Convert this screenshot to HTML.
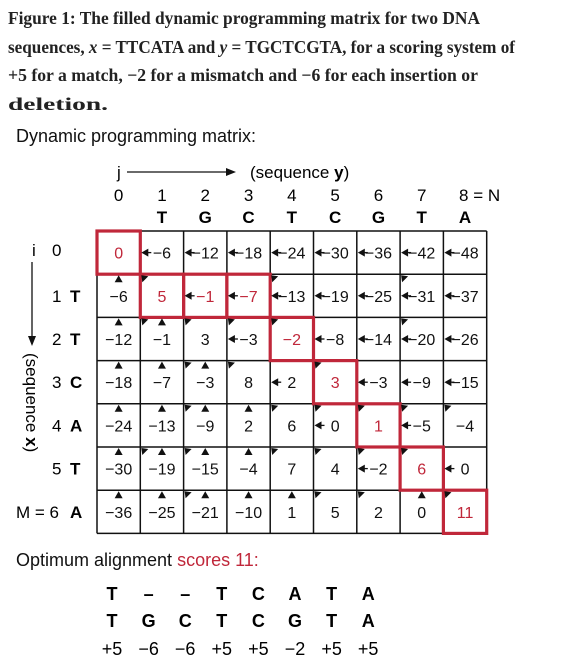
<!DOCTYPE html>
<html><head><meta charset="utf-8"><style>
body{margin:0;width:565px;height:668px;background:#fff;position:relative;overflow:hidden;font-family:"Liberation Sans",sans-serif;color:#111}
.a{position:absolute;white-space:nowrap}
</style></head><body>
<svg width="565" height="120" style="position:absolute;left:0;top:0" font-family="Liberation Serif, serif" font-weight="bold" font-size="17.5" fill="#222">
<text x="8" y="24" textLength="472" lengthAdjust="spacingAndGlyphs">Figure 1: The filled dynamic programming matrix for two DNA</text>
<text x="8" y="53" textLength="507" lengthAdjust="spacingAndGlyphs">sequences, <tspan font-style="italic">x</tspan> = TTCATA and <tspan font-style="italic">y</tspan> = TGCTCGTA, for a scoring system of</text>
<text x="8" y="81" textLength="470" lengthAdjust="spacingAndGlyphs">+5 for a match, −2 for a mismatch and −6 for each insertion or</text>
<text x="8" y="110" textLength="100" lengthAdjust="spacingAndGlyphs">deletion.</text>
</svg>
<div class="a" style="left:16px;top:126px;font-size:18px">Dynamic programming matrix:</div>
<svg id="m" width="565" height="668" style="position:absolute;left:0;top:0" font-family="Liberation Sans, sans-serif"></svg>
<div class="a" style="left:16px;top:550px;font-size:18px">Optimum alignment <span style="color:#c0273a">scores 11:</span></div>
<script>
var s=document.getElementById('m'),h='';
var X=97,Y=231,W=43.3,H=43.2,x="TTCATA",y="TGCTCGTA",R="#c0273a";
function t(px,py,str,o){h+='<text x="'+px+'" y="'+py+'" '+(o||'')+'>'+str+'</text>';}
t(117,178,'j','font-size="17"');
h+='<line x1="127" y1="172" x2="228" y2="172" stroke="#111" stroke-width="1.3"/><polygon points="236,172 226,168 226,176" fill="#111"/>';
t(250,178,'(sequence <tspan font-weight="bold">y</tspan>)','font-size="17"');
for(var j=0;j<=8;j++){var cx=X+W*(j+0.5);t(cx,201,j==8?'8 = N':j,'font-size="17" text-anchor="'+(j==8?'start':'middle')+'"'+(j==8?' dx="-6"':''));if(j>0)t(cx,223,y[j-1],'font-size="17" font-weight="bold" text-anchor="middle"');}
t(32,256,'i','font-size="17"');t(52,256,'0','font-size="17"');
for(var i=1;i<=6;i++){var cy=Y+H*(i+0.5)+6;t(i==6?16:52,cy,i==6?'M = 6':i,'font-size="17"');t(70,cy,x[i-1],'font-size="17" font-weight="bold"');}
h+='<line x1="32" y1="262" x2="32" y2="338" stroke="#111" stroke-width="1.3"/><polygon points="32,346 28,336 36,336" fill="#111"/>';
h+='<text transform="translate(26,353) rotate(90)" font-size="17">(sequence <tspan font-weight="bold">x</tspan>)</text>';
var F=[],P=[];
for(var i=0;i<=6;i++){F[i]=[];P[i]=[];for(var j=0;j<=8;j++){
 if(i==0&&j==0){F[i][j]=0;P[i][j]={};continue;}
 var c=[];if(i>0&&j>0)c.push(['d',F[i-1][j-1]+(x[i-1]==y[j-1]?5:-2)]);
 if(i>0)c.push(['u',F[i-1][j]-6]);if(j>0)c.push(['l',F[i][j-1]-6]);
 var m=Math.max.apply(null,c.map(function(a){return a[1]}));F[i][j]=m;P[i][j]={};c.forEach(function(a){if(a[1]==m)P[i][j][a[0]]=1;});}}
var path={"0,0":1,"1,1":1,"1,2":1,"1,3":1,"2,4":1,"3,5":1,"4,6":1,"5,7":1,"6,8":1};
for(var i=0;i<=7;i++)h+='<line x1="'+X+'" y1="'+(Y+H*i)+'" x2="'+(X+9*W)+'" y2="'+(Y+H*i)+'" stroke="#111" stroke-width="1.5"/>';
for(var j=0;j<=9;j++)h+='<line x1="'+(X+W*j)+'" y1="'+Y+'" x2="'+(X+W*j)+'" y2="'+(Y+7*H)+'" stroke="#111" stroke-width="1.5"/>';
for(var k in path){var a=k.split(',');h+='<rect x="'+(X+W*a[1])+'" y="'+(Y+H*a[0])+'" width="'+W+'" height="'+H+'" fill="none" stroke="'+R+'" stroke-width="3.2"/>';}
for(var i=0;i<=6;i++)for(var j=0;j<=8;j++){
 var x0=X+W*j,y0=Y+H*i,red=path[i+','+j],v=F[i][j];
 t(x0+W/2,y0+H/2+6,(v<0?'−'+(-v):v),'font-size="16" text-anchor="middle" fill="'+(red?R:'#111')+'"');
 var p=P[i][j];
 if(p.l)h+='<polygon points="'+(x0+1)+','+(y0+H/2)+' '+(x0+8)+','+(y0+H/2-4)+' '+(x0+8)+','+(y0+H/2+4)+'" fill="#111"/><line x1="'+(x0+7)+'" y1="'+(y0+H/2)+'" x2="'+(x0+11)+'" y2="'+(y0+H/2)+'" stroke="#111" stroke-width="1.3"/>';
 if(p.u)h+='<polygon points="'+(x0+W/2)+','+(y0+1)+' '+(x0+W/2-4)+','+(y0+8)+' '+(x0+W/2+4)+','+(y0+8)+'" fill="#111"/>';
 if(p.d)h+='<polygon points="'+(x0+1)+','+(y0+1)+' '+(x0+8)+','+(y0+2)+' '+(x0+2)+','+(y0+8)+'" fill="#111"/>';
}
var r1="T––TCATA",r2="TGCTCGTA",r3=["+5","−6","−6","+5","+5","−2","+5","+5"];
for(var k=0;k<8;k++){var cx=112+36.6*k;
 t(cx,600,r1[k],'font-size="18" font-weight="bold" text-anchor="middle"');
 t(cx,627,r2[k],'font-size="18" font-weight="bold" text-anchor="middle"');
 t(cx,655,r3[k],'font-size="18" text-anchor="middle"');}
s.innerHTML=h;
</script>
</body></html>
